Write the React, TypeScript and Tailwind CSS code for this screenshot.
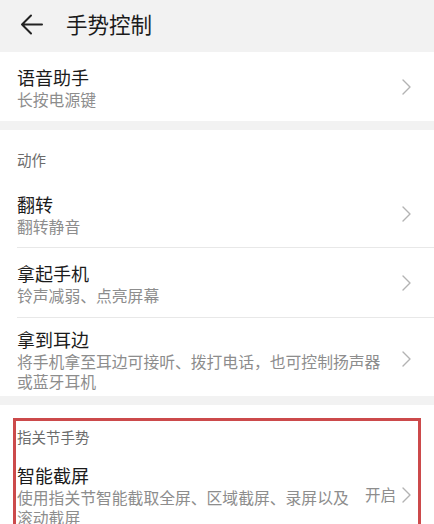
import React from 'react';

const font = { fontFamily: '"Noto Sans CJK SC", "Noto Sans", sans-serif' };

const Chevron = () => (
  <svg width="9" height="16" viewBox="0 0 9 16" fill="none" className="shrink-0">
    <path d="M1 1l7 7-7 7" stroke="#b3b3b3" strokeWidth="1.4" strokeLinecap="round" strokeLinejoin="round" />
  </svg>
);

interface RowProps {
  title: string;
  sub: string;
  className?: string;
}

const Row: React.FC<RowProps> = ({ title, sub, className = '' }) => (
  <div className={`flex items-center ${className}`}>
    <div className="w-[368px]">
      <div className="text-[18px] leading-[26px] text-[#1b1b1b]">{title}</div>
      <div className="text-[15.8px] leading-[20px] text-[#8d8d8d]">{sub}</div>
    </div>
    <div className="ml-auto">
      <Chevron />
    </div>
  </div>
);

export default function App() {
  return (
    <div className="w-[434px] h-[524px] overflow-hidden bg-[#f2f2f2]" style={font}>
      <div className="h-[52px] flex items-center pl-[20px] pb-[3px]">
        <svg width="23" height="21" viewBox="0 0 23 21" fill="none">
          <path d="M22 10.5H2M11 1.5l-9 9 9 9" stroke="#222" strokeWidth="2" strokeLinecap="round" strokeLinejoin="round" />
        </svg>
        <span className="ml-[23px] text-[21.5px] text-[#1b1b1b]">手势控制</span>
      </div>

      <div className="bg-white pl-[17px] pr-[23px]">
        <Row title="语音助手" sub="长按电源键" className="h-[69px]" />
      </div>

      <div className="mt-[9px] bg-white">
        <div className="pl-[17px] pt-[20px] pb-[10px] text-[14.5px] leading-[20px] text-[#6b6b6b]">动作</div>
        <div className="pl-[17px]">
          <div className="pr-[23px] border-b border-[#e8e8e8]">
            <Row title="翻转" sub="翻转静音" className="h-[67px]" />
          </div>
          <div className="pr-[23px] border-b border-[#e8e8e8]">
            <Row title="拿起手机" sub="铃声减弱、点亮屏幕" className="h-[69px]" />
          </div>
          <div className="pr-[23px]">
            <div className="flex items-center pt-[8px] pb-[4px]">
              <div className="w-[368px]">
                <div className="text-[18px] leading-[26px] text-[#1b1b1b]">拿到耳边</div>
                <div className="text-[15.8px] leading-[20px] text-[#8d8d8d]">将手机拿至耳边可接听、拨打电话，也可控制扬声器或蓝牙耳机</div>
              </div>
              <div className="ml-auto">
                <Chevron />
              </div>
            </div>
          </div>
        </div>
      </div>

      <div className="mt-[9px] bg-white h-[200px] pt-[13px] px-[13px]">
        <div className="border-[3px] border-b-0 border-[#cc4a4b] h-full pl-[1px] pr-[7px]">
          <div className="pt-[6px] pb-[15px] text-[14.5px] leading-[20px] text-[#6b6b6b]">指关节手势</div>
          <div className="flex items-center">
            <div className="w-[340px]">
              <div className="text-[18px] leading-[26px] text-[#1b1b1b]">智能截屏</div>
              <div className="text-[15.8px] leading-[20px] text-[#8d8d8d]">使用指关节智能截取全屏、区域截屏、录屏以及滚动截屏</div>
            </div>
            <div className="ml-auto flex items-center gap-[6px]">
              <span className="text-[15.5px] text-[#8d8d8d]">开启</span>
              <Chevron />
            </div>
          </div>
        </div>
      </div>
    </div>
  );
}
